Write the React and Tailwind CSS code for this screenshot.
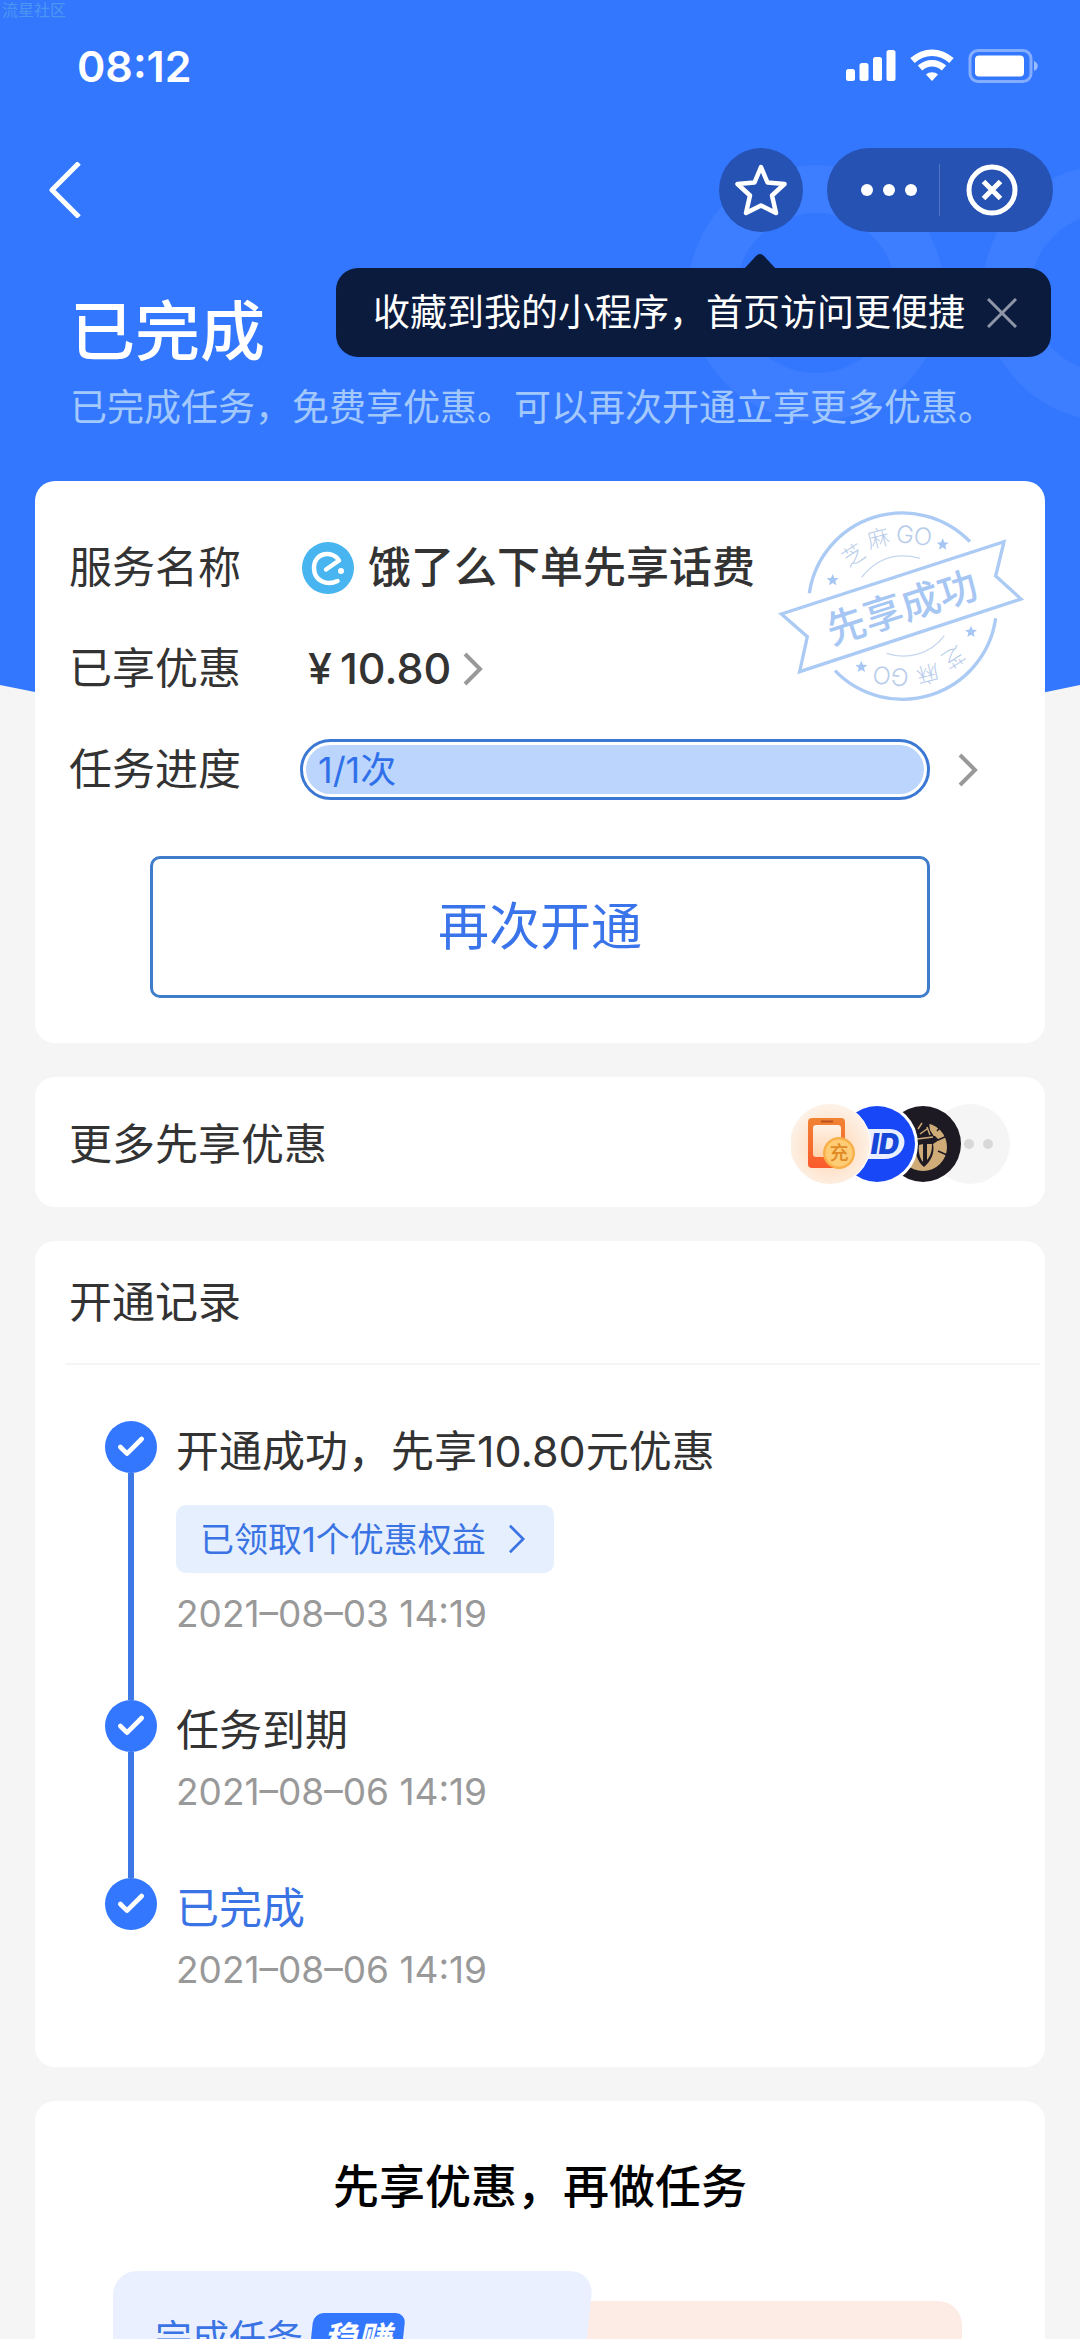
import { Check } from 'lucide-react'

const records = [
  { title: '开通成功，先享10.80元优惠', benefit: '已领取1个优惠权益', time: '2021–08–03 14:19' },
  { title: '任务到期', time: '2021–08–06 14:19' },
  { title: '已完成', time: '2021–08–06 14:19', current: true },
]

function Chevron({ className, strokeWidth = 4 }) {
  return (
    <svg viewBox="0 0 20 34" fill="none" stroke="currentColor" strokeWidth={strokeWidth} className={className}>
      <path d="M2 2l15 15L2 32" />
    </svg>
  )
}

function StatusIcons() {
  return (
    <svg viewBox="0 0 192 34" fill="#fff" className="w-[192px] h-[34px]">
      {/* Signal */}
      <rect x="0" y="20" width="9" height="12" rx="2.5" />
      <rect x="13.500" y="14" width="9" height="18" rx="2.5" />
      <rect x="27" y="8" width="9" height="24" rx="2.5" />
      <rect x="40.500" y="1" width="9" height="31" rx="2.5" />
      {/* Wifi */}
      <g fill="none" stroke="#fff" strokeWidth="6.500">
        <path d="M66.500 11.500c11.500-10.500 27.500-10.500 39 0" />
        <path d="M74 19c7-6.500 17-6.500 24 0" />
      </g>
      <path d="M80 25.500c3.500-3 8.500-3 12 0L86 32z" />
      {/* Battery */}
      <rect x="124" y="1.500" width="61" height="31" rx="8" fill="none" stroke="#fff" strokeOpacity=".4" strokeWidth="3" />
      <rect x="129" y="6.500" width="49" height="21" rx="4" />
      <path d="M188 12c5 2 5 8 0 10z" fillOpacity=".5" />
    </svg>
  )
}

function Stamp() {
  const star = 'M0-18l5 12 13 1-10 8 3 13-11-7-11 7 3-13-10-8 13-1z'
  return (
    <svg viewBox="0 0 855 690" className="absolute right-0 top-[9px] w-[285px] h-[230px]" fill="none" stroke="#abcaf4" strokeWidth="10">
      <path d="M148 310A282 282 0 0 1 630 155" />
      <path d="M707 385A282 282 0 0 1 225 542" />
      <path d="M64 372L732 155l-25 103 76 69-664 218 23-105z" />
      <g stroke="#c5d6ee" strokeWidth="4">
        <path d="M305 262C350 205 410 186 480 205" />
        <path d="M380 490C440 510 510 494 553 437" />
      </g>
      <g fill="#a6c6f3" stroke="none">
        <path d={star} transform="translate(218 270)" />
        <path d={star} transform="translate(548 163)" />
        <path d={star} transform="translate(304 530)" />
        <path d={star} transform="translate(633 425)" />
        <text x="425" y="393" fontSize="117" fontWeight="500" textAnchor="middle" transform="rotate(-18 430 350)">先享成功</text>
      </g>
      <g fill="#b9cdea" stroke="none" fontSize="66" fontWeight="300" textAnchor="middle">
        <text transform="translate(280 195) rotate(-33)" y="24">芝</text>
        <text transform="translate(355 145) rotate(-14)" y="24">麻</text>
        <text transform="translate(462 137) rotate(6)" y="25" fontSize="72">GO</text>
        <text transform="translate(580 502) rotate(147)" y="24">芝</text>
        <text transform="translate(503 552) rotate(166)" y="24">麻</text>
        <text transform="translate(392 558) rotate(186)" y="25" fontSize="72">GO</text>
      </g>
    </svg>
  )
}

function ElemeLogo() {
  return (
    <svg viewBox="0 0 52 52" className="w-[52px] h-[52px]">
      <circle cx="26" cy="26" r="26" fill="#48b4f0" />
      <path d="M24 27.500L37 18.500C31 8 12 10 12 26c0 13 13 18 23.500 13" fill="none" stroke="#fff" strokeWidth="4.500" strokeLinecap="round" strokeLinejoin="round" />
      <circle cx="39" cy="29" r="3" fill="#fff" />
    </svg>
  )
}

function BrandIcons() {
  return (
    <svg viewBox="0 0 220 82" className="w-[220px] h-[82px]">
      <defs>
        <linearGradient id="phone" x1="0" y1="0" x2="0" y2="1">
          <stop offset="0" stopColor="#f08333" />
          <stop offset="1" stopColor="#fb5a2c" />
        </linearGradient>
        <linearGradient id="screen" x1="0" y1="0" x2="0" y2="1">
          <stop offset="0" stopColor="#fff3e6" />
          <stop offset="1" stopColor="#ffd2ad" />
        </linearGradient>
        <radialGradient id="peach" cx=".5" cy=".55">
          <stop offset="0" stopColor="#ffd3ae" />
          <stop offset="1" stopColor="#fdf0e4" />
        </radialGradient>
      </defs>
      <circle cx="179" cy="41" r="40" fill="#f5f5f5" />
      <circle cx="160" cy="41" r="5" fill="#d8d8d8" />
      <circle cx="178" cy="41" r="5" fill="#d8d8d8" />
      <circle cx="197" cy="41" r="5" fill="#d8d8d8" />
      {/* Knight */}
      <circle cx="132" cy="41" r="38" fill="#1d1a24" />
      <circle cx="132" cy="44" r="24" fill="#cfab78" />
      <path d="M124 34l20-1 4 4-6 4c2 9-2 17-9 23-7-6-9-14-8-22z" fill="#1d1a24" />
      <path d="M128 42l4-1v18c-3-4-5-10-4-17zM136 41l5 0c0 7-1 11-5 16z" fill="#cfab78" />
      <path d="M122 22l8-8 3 5 5 0 1 8 5 8-20 1 1-7z" fill="#1d1a24" />
      <path d="M126 24l5-6M128 28l8-5M130 33l8-4M147 37l9-4M147 48l9 4M146 28l6-7" stroke="#1d1a24" strokeWidth="1.500" />
      <path d="M127 26l4-6M129 31l7-5M126 36l16-2M136 24l3 8" stroke="#cfab78" strokeWidth="1.500" />
      {/* ID brand */}
      <circle cx="86" cy="41" r="41" fill="#fff" />
      <circle cx="86" cy="41" r="38" fill="#1747f6" />
      <path d="M66 26h33c22 1 18 30-6 30H66z" fill="#e9efff" />
      <text x="108" y="51" fontSize="28" fontWeight="900" fontStyle="italic" textAnchor="end" fill="#1747d8">ID</text>
      {/* Phone top-up */}
      <circle cx="39" cy="41" r="41" fill="#fff" />
      <circle cx="39" cy="41" r="40" fill="url(#peach)" />
      <rect x="17" y="15" width="37" height="50" rx="4" fill="url(#phone)" />
      <rect x="22" y="22" width="28" height="32" rx="3" fill="url(#screen)" />
      <path d="M30 18.500h12" stroke="#b8501c" strokeWidth="2" />
      <circle cx="48" cy="50" r="16" fill="#f9b04a" />
      <circle cx="48" cy="50" r="13.500" fill="#fdcc75" />
      <text x="48" y="57" fontSize="19" fontWeight="500" textAnchor="middle" fill="#e08a25">充</text>
    </svg>
  )
}

function Header() {
  return (
    <header className="relative text-white">
      <span className="absolute left-0.5 top-0 text-[16px] leading-5 text-[#4a97f2]">流星社区</span>

      {/* Status bar */}
      <div className="flex h-[132px] items-center justify-between pl-[77px] pr-[42px]">
        <time className="text-[43px] font-semibold">08:12</time>
        <StatusIcons />
      </div>

      {/* Nav */}
      <nav className="relative mt-4 flex h-[84px] items-center gap-6 pl-12 pr-[27px]">
        <button type="button" aria-label="返回" className="mr-auto">
          <svg viewBox="0 0 34 56" fill="none" stroke="#fff" strokeWidth="5" strokeLinejoin="round" className="w-[34px] h-14">
            <path d="M31 1L4 28l27 27" />
          </svg>
        </button>
        <button type="button" aria-label="收藏" className="flex size-[84px] items-center justify-center rounded-full bg-[#2552b3]">
          <svg viewBox="0 0 52 52" fill="none" stroke="#fff" strokeWidth="4.500" strokeLinejoin="round" className="size-[52px]">
            <path d="M26 3l6.500 15.500L49.500 20 37 31.500 41 49 26 41.500 11 49l4-17.500L2.500 20l17-1.500z" />
          </svg>
        </button>
        <div className="flex h-[84px] w-[226px] items-center rounded-full bg-[#2552b3]">
          <button type="button" aria-label="更多" className="flex w-[112px] items-center justify-center gap-[10px] pl-[12px]">
            <i className="size-3 rounded-full bg-white" />
            <i className="size-3 rounded-full bg-white" />
            <i className="size-3 rounded-full bg-white" />
          </button>
          <span className="h-[52px] w-px bg-white/20" />
          <button type="button" aria-label="关闭" className="flex flex-1 justify-center pr-[10px]">
            <svg viewBox="0 0 52 52" fill="none" stroke="#fff" strokeWidth="5" className="size-[52px]">
              <circle cx="26" cy="26" r="23" />
              <path d="M17.500 17.500l17 17M34.500 17.500l-17 17" />
            </svg>
          </button>
        </div>

        {/* Tooltip */}
        <div className="absolute right-[29px] top-[120px] z-10 flex h-[89px] items-center gap-[22px] rounded-[22px] bg-[#0b1b3d] pl-[37px] pr-[34px]">
          <svg viewBox="0 0 32 16" className="absolute -top-[15px] right-[275px] h-4 w-8" fill="#0b1b3d">
            <path d="M0 16L12 3q4-4 8 0l12 13z" />
          </svg>
          <span className="whitespace-nowrap text-[37px] leading-[56px]">收藏到我的小程序，首页访问更便捷</span>
          <button type="button" aria-label="关闭提示">
            <svg viewBox="0 0 30 30" stroke="#8f96a8" strokeWidth="3" className="size-[30px]">
              <path d="M1 1l28 28M29 1L1 29" />
            </svg>
          </button>
        </div>
      </nav>

      <h1 className="mt-[60px] px-[70px] text-[65px] font-medium leading-[80px]">已完成</h1>
      <p className="mt-2 px-[70px] text-[37px] leading-[56px] text-[#a2c8fc]">已完成任务，免费享优惠。可以再次开通立享更多优惠。</p>
    </header>
  )
}

function ServiceCard() {
  return (
    <section className="relative rounded-[20px] bg-white pb-[45px] pt-9 text-[43px] text-[#333]">
      <Stamp />
      <dl className="pl-[34px] pr-[67px]">
        <div className="flex h-[101px] items-center">
          <dt className="w-[231px]">服务名称</dt>
          <dd className="flex items-center gap-[14px] pl-0.5 font-medium">
            <ElemeLogo />
            饿了么下单先享话费
          </dd>
        </div>
        <div className="flex h-[101px] items-center">
          <dt className="w-[231px]">已享优惠</dt>
          <dd className="pl-2">
            <a href="#discount" className="flex items-center font-medium">
              <span className="mr-2">¥</span>10.80
              <Chevron className="ml-3 h-[34px] w-5 text-[#999]" />
            </a>
          </dd>
        </div>
        <div className="flex h-[101px] items-center">
          <dt className="w-[231px]">任务进度</dt>
          <dd className="flex-1">
            <a href="#progress" className="flex items-center gap-7">
              <span className="h-[61px] flex-1 rounded-full border-3 border-[#3b78d4] bg-white p-[3px]">
                <span className="flex h-full items-center rounded-full bg-[#bbd5fd] pl-3 text-[36px] text-[#2f70ea]">1/1次</span>
              </span>
              <Chevron className="h-[34px] w-5 text-[#999]" />
            </a>
          </dd>
        </div>
      </dl>
      <div className="mt-9 px-[115px]">
        <button type="button" className="h-[142px] w-full rounded-[10px] border-3 border-[#3f7dcb] text-[51px] text-[#3a74ea]">再次开通</button>
      </div>
    </section>
  )
}

function Records() {
  return (
    <section className="rounded-[20px] bg-white pb-[71px] text-[43px] text-[#333]">
      <h2 className="flex h-[122px] items-center px-[34px]">开通记录</h2>
      <hr className="ml-[30px] mr-[5px] border-t-2 border-[#f5f5f5]" />
      <ol className="pl-[70px] pt-14">
        {records.map((record, i) => {
          const last = i === records.length - 1
          return (
            <li key={record.title} className="flex gap-[19px]">
              <div className="flex flex-col items-center">
                <span className="flex size-[52px] items-center justify-center rounded-full bg-[#3377ff]">
                  <Check className="size-[32px] text-white" strokeWidth={3.5} />
                </span>
                {!last && <span className="w-[6px] flex-1 bg-[#3d78e6]" />}
              </div>
              <div className={last ? '' : 'pb-[60px]'}>
                <h3 className={record.current ? 'leading-[60px] text-[#3a74e4]' : 'leading-[60px]'}>{record.title}</h3>
                {record.benefit && (
                  <a href="#benefit" className="mb-[15px] mt-6 flex h-[68px] w-fit items-center gap-[22px] rounded-[10px] bg-[#e6effd] px-6 text-[34px] text-[#3a74e4]">
                    {record.benefit}
                    <Chevron className="mr-1 h-[30px] w-[18px]" strokeWidth={3} />
                  </a>
                )}
                <time className={record.benefit ? 'block text-[37px] leading-[52px] text-[#999]' : 'mt-[6px] block text-[37px] leading-[52px] text-[#999]'}>{record.time}</time>
              </div>
            </li>
          )
        })}
      </ol>
    </section>
  )
}

function Guide() {
  return (
    <section className="rounded-t-[20px] bg-white pt-[50px]">
      <h2 className="text-center text-[46px] font-medium leading-[70px] text-black">先享优惠，再做任务</h2>
      <div className="mt-[50px] flex pl-[78px] pr-[83px]">
        <div className="relative z-10 h-[240px] w-[481px] before:absolute before:inset-y-0 before:left-0 before:right-10 before:rounded-tl-[24px] before:bg-[#eaf0ff] after:absolute after:inset-y-0 after:right-0 after:w-20 after:origin-top after:-skew-x-6 after:rounded-tr-[24px] after:bg-[#eaf0ff]">
          <div className="relative z-10 flex items-center gap-2 pl-[42px] pt-10 text-[37px] text-[#3a74e4]">
            完成任务
            <span className="relative px-3 text-[34px] font-bold italic leading-[52px] text-white before:absolute before:inset-0 before:-z-10 before:-skew-x-6 before:rounded-[10px] before:bg-[#3377ff]">稳赚</span>
          </div>
        </div>
        <div className="-ml-12 mt-[30px] h-[210px] flex-1 rounded-tr-[24px] bg-[#fdece6]" />
      </div>
    </section>
  )
}

export default function App() {
  return (
    <div className="relative h-screen overflow-hidden bg-[#f5f5f5] font-['Inter','Noto_Sans_CJK_SC',sans-serif]">
      {/* Blue backdrop with a curved bottom edge */}
      <svg viewBox="0 0 1080 800" preserveAspectRatio="none" className="absolute left-0 top-0 h-[800px] w-full">
        <path d="M0 0h1080v685Q540 800 0 685z" fill="#3377ff" />
        <g fill="none" stroke="#fff" strokeWidth="48" strokeOpacity=".05">
          <circle cx="816" cy="293" r="104" />
          <circle cx="1110" cy="293" r="104" />
        </g>
      </svg>

      <div className="relative">
        <Header />
        <main className="mt-[45px] flex flex-col gap-[34px] px-[35px]">
          <ServiceCard />
          <section className="flex h-[130px] items-center justify-between rounded-[20px] bg-white px-[34px] pt-1">
            <h2 className="text-[43px] text-[#333]">更多先享优惠</h2>
            <BrandIcons />
          </section>
          <Records />
          <Guide />
        </main>
      </div>
    </div>
  )
}
